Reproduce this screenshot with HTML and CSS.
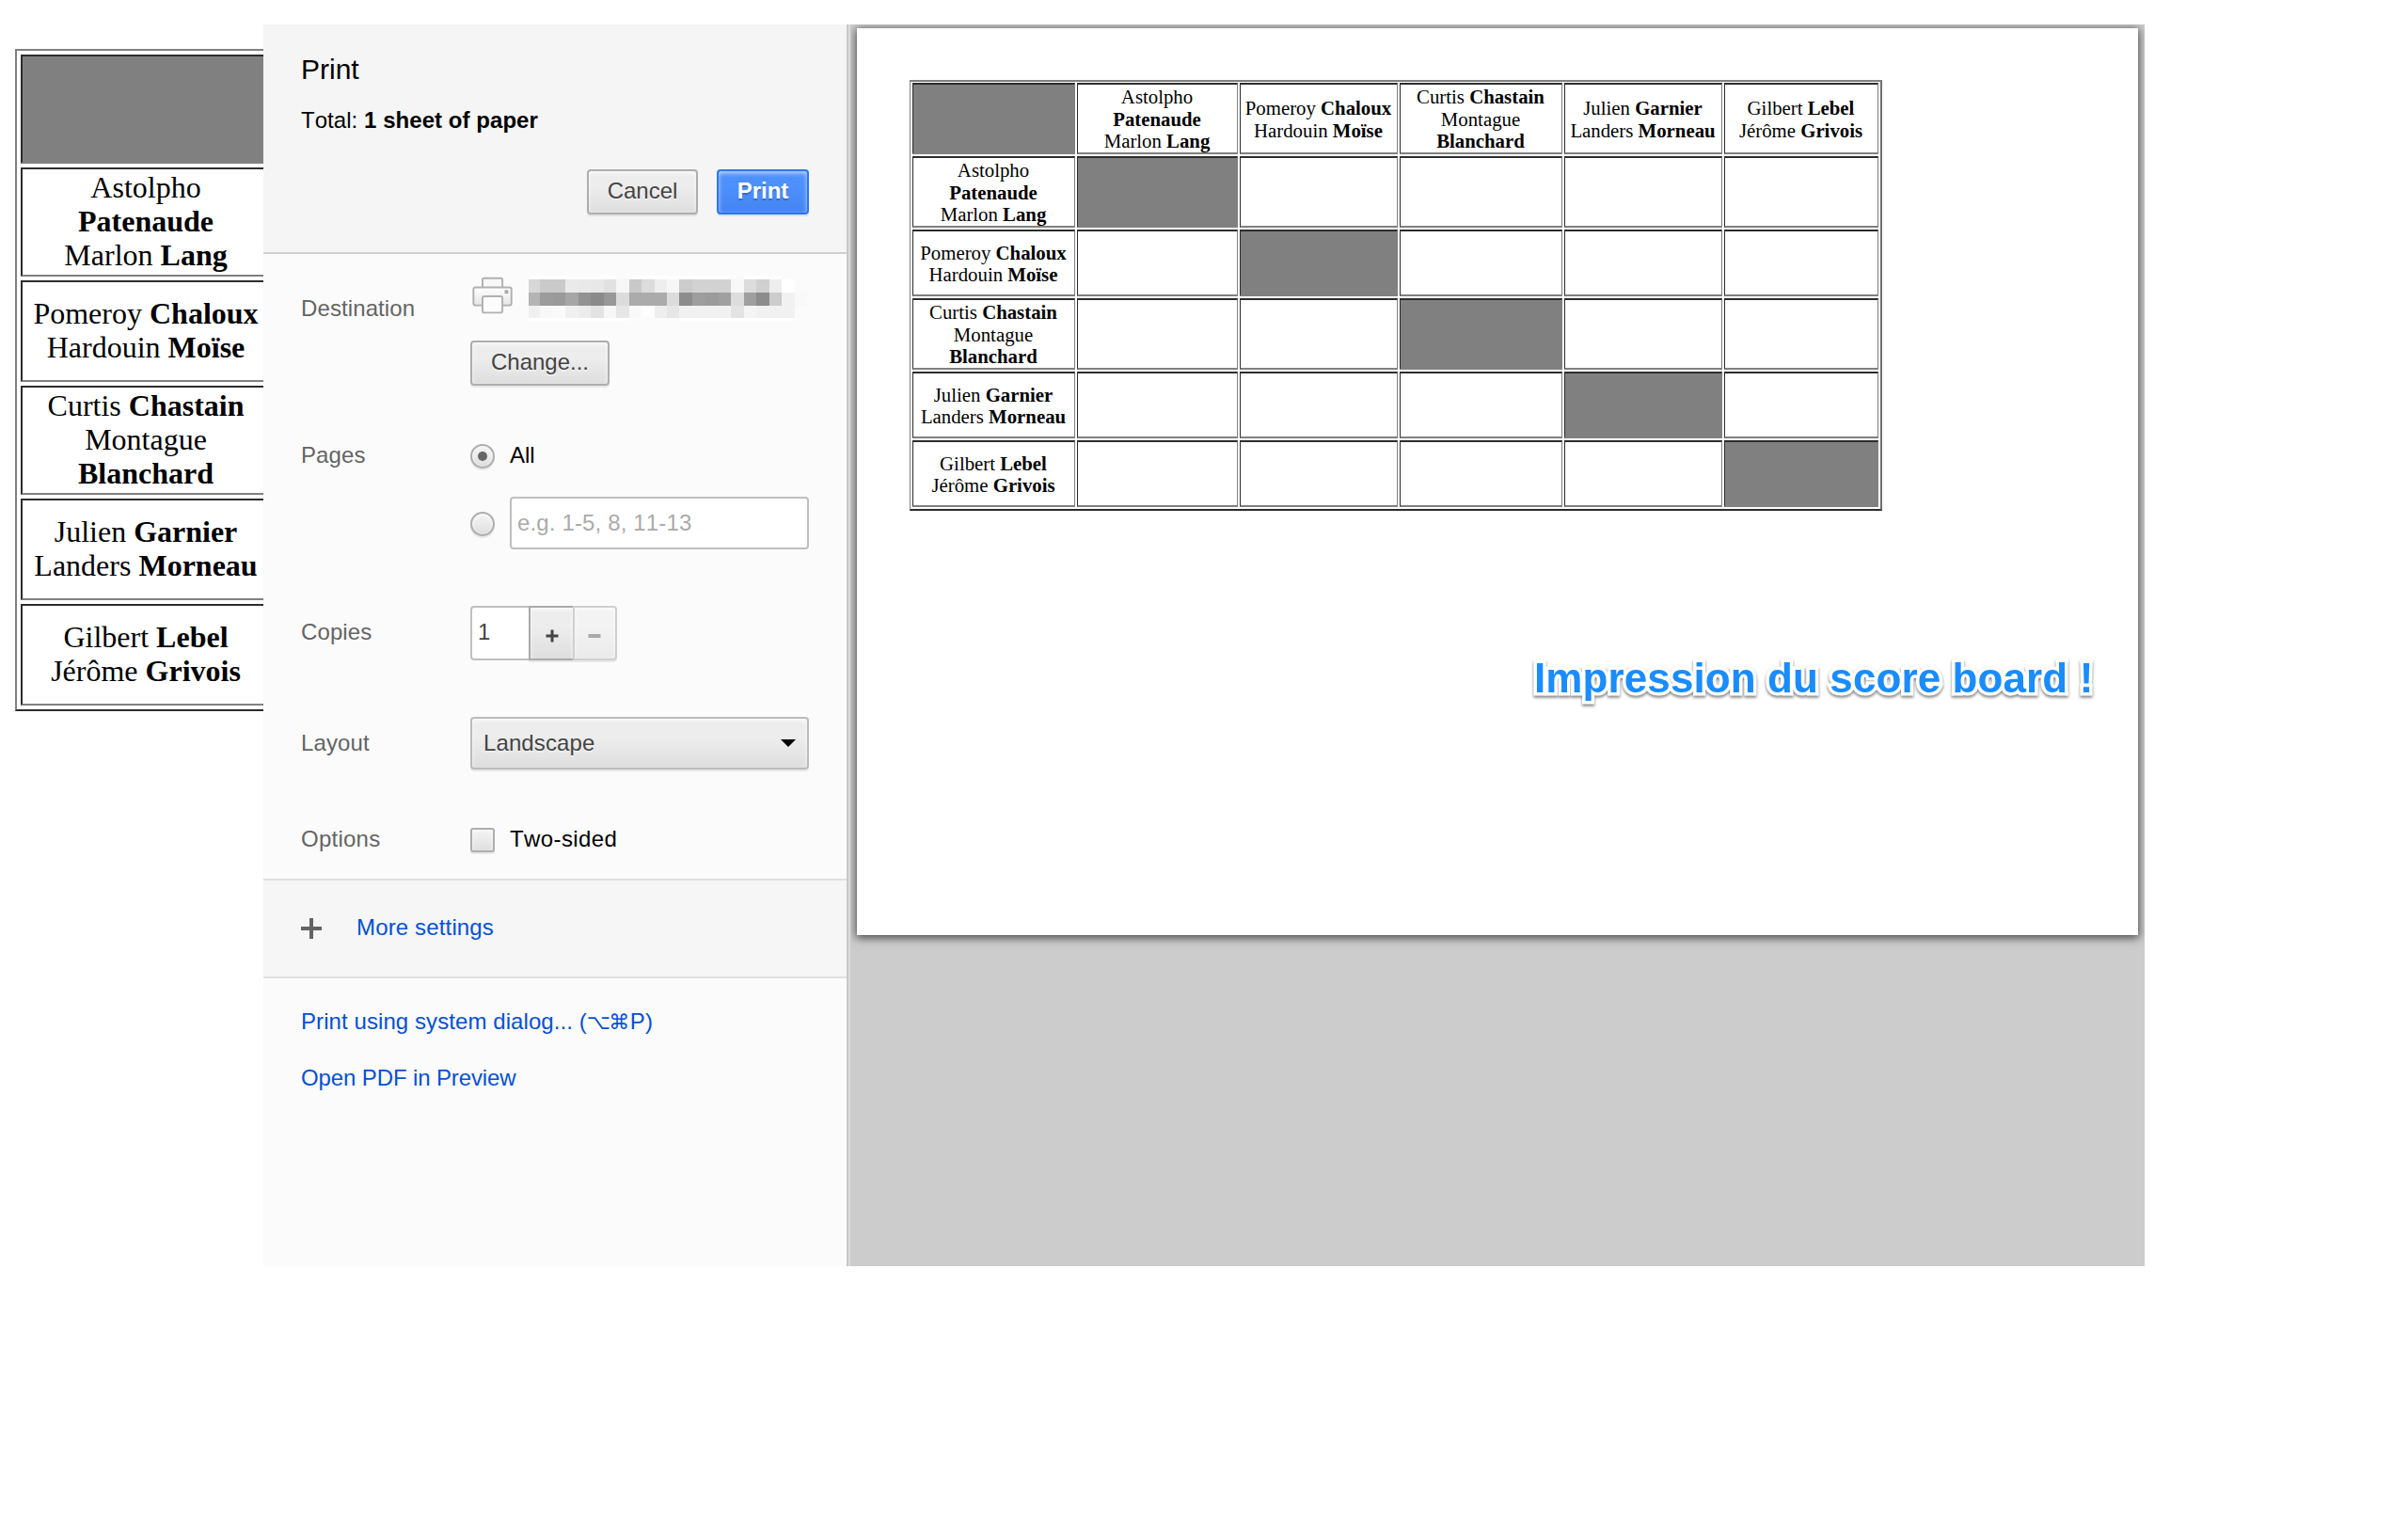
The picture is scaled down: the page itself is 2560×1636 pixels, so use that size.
FILE: index.html
```html
<!DOCTYPE html>
<html lang="en">
<head>
<meta charset="utf-8">
<title>Print</title>
<link rel="stylesheet" href="styles.css">
</head>
<body>
<main class="board">
  <div class="cell cell-filled"></div>
  <div class="cell">Astolpho<br><b>Patenaude</b><br>Marlon <b>Lang</b></div>
  <div class="cell">Pomeroy <b>Chaloux</b><br>Hardouin <b>Moïse</b></div>
  <div class="cell">Curtis <b>Chastain</b><br>Montague<br><b>Blanchard</b></div>
  <div class="cell">Julien <b>Garnier</b><br>Landers <b>Morneau</b></div>
  <div class="cell">Gilbert <b>Lebel</b><br>Jérôme <b>Grivois</b></div>
</main>

<div class="dialog">
  <aside class="sidebar">
    <header class="header">
      <h1 class="title">Print</h1>
      <p class="total">Total: <b>1 sheet of paper</b></p>
      <div class="actions">
        <button class="button cancel">Cancel</button>
        <button class="button primary">Print</button>
      </div>
    </header>

    <section class="row row-destination">
      <div class="label">Destination</div>
      <div class="control">
        <div class="printer">
          <svg class="printer-icon" width="48" height="48" viewBox="0 0 48 48">
            <defs><linearGradient id="body" x1="0" y1="0" x2="0" y2="1"><stop offset="0" stop-color="#fff"/><stop offset="1" stop-color="#e6e6e6"/></linearGradient></defs>
            <g stroke="#b0b0b0" stroke-width="2">
              <rect x="13.500" y="3" width="22" height="14" rx="1.5" fill="#f8f8f8"/>
              <rect x="3.500" y="13" width="42" height="20" rx="2.5" fill="url(#body)"/>
              <rect x="13.500" y="23" width="22" height="18" rx="2" fill="#fcfcfc"/>
            </g>
            <rect x="38" y="16" width="4" height="4" rx="1" fill="#a8a8a8"/>
          </svg>
          <svg class="redacted" width="310" height="50" viewBox="0 0 310 50" shape-rendering="crispEdges">
            <path fill="#fff" d="M0 0h97v4H0zM111 0h58v4h-58zM168 0h56v4h-56zM238 0h42v4h-42zM0 47h111v3H0zM168 47h126v3H168z"/>
            <g id="mosaic"></g>
          </svg>
        </div>
        <button class="button change">Change...</button>
      </div>
    </section>

    <section class="row row-pages">
      <div class="label">Pages</div>
      <div class="control">
        <div class="choice"><span class="radio radio-on"></span><span class="choice-text">All</span></div>
        <div class="choice choice-range"><span class="radio"></span><div class="field">e.g. 1-5, 8, 11-13</div></div>
      </div>
    </section>

    <section class="row row-copies">
      <div class="label">Copies</div>
      <div class="control stepper">
        <div class="count">1</div>
        <div class="step step-up"><svg width="14" height="14" viewBox="0 0 14 14"><path d="M7 .5v13M.5 7h13" stroke="#444" stroke-width="3"/></svg></div>
        <div class="step step-down"><svg width="14" height="14" viewBox="0 0 14 14"><path d="M.5 7h13" stroke="#aaa" stroke-width="4"/></svg></div>
      </div>
    </section>

    <section class="row row-layout">
      <div class="label">Layout</div>
      <div class="control">
        <div class="button select"><span>Landscape</span><svg width="16" height="8" viewBox="0 0 16 8"><path d="M0 0h16L8 8z"/></svg></div>
      </div>
    </section>

    <section class="row row-options">
      <div class="label">Options</div>
      <div class="control">
        <div class="choice"><span class="checkbox"></span><span class="choice-text">Two-sided</span></div>
      </div>
    </section>

    <section class="more">
      <svg width="22" height="22" viewBox="0 0 22 22"><path d="M11 0v22M0 11h22" stroke="#646464" stroke-width="4"/></svg>
      <a class="link">More settings</a>
    </section>

    <nav class="links">
      <a class="link link-system">Print using system dialog... (<span class="key">⌥</span><span class="key">⌘</span>P)</a>
      <a class="link link-pdf">Open PDF in Preview</a>
    </nav>
  </aside>

  <div class="preview">
    <article class="page">
      <div class="sheet">
        <div class="slot filled"></div>
        <div class="slot">Astolpho<br><b>Patenaude</b><br>Marlon <b>Lang</b></div>
        <div class="slot">Pomeroy <b>Chaloux</b><br>Hardouin <b>Moïse</b></div>
        <div class="slot">Curtis <b>Chastain</b><br>Montague<br><b>Blanchard</b></div>
        <div class="slot">Julien <b>Garnier</b><br>Landers <b>Morneau</b></div>
        <div class="slot">Gilbert <b>Lebel</b><br>Jérôme <b>Grivois</b></div>

        <div class="slot">Astolpho<br><b>Patenaude</b><br>Marlon <b>Lang</b></div>
        <div class="slot filled"></div><div class="slot"></div><div class="slot"></div><div class="slot"></div><div class="slot"></div>

        <div class="slot">Pomeroy <b>Chaloux</b><br>Hardouin <b>Moïse</b></div>
        <div class="slot"></div><div class="slot filled"></div><div class="slot"></div><div class="slot"></div><div class="slot"></div>

        <div class="slot">Curtis <b>Chastain</b><br>Montague<br><b>Blanchard</b></div>
        <div class="slot"></div><div class="slot"></div><div class="slot filled"></div><div class="slot"></div><div class="slot"></div>

        <div class="slot">Julien <b>Garnier</b><br>Landers <b>Morneau</b></div>
        <div class="slot"></div><div class="slot"></div><div class="slot"></div><div class="slot filled"></div><div class="slot"></div>

        <div class="slot">Gilbert <b>Lebel</b><br>Jérôme <b>Grivois</b></div>
        <div class="slot"></div><div class="slot"></div><div class="slot"></div><div class="slot"></div><div class="slot filled"></div>
      </div>
      <p class="caption">Impression du score board !</p>
    </article>
  </div>
</div>
<script src="mosaic.js"></script>
</body>
</html>
```
FILE: styles.css
```css
* { box-sizing: border-box; }

body {
  margin: 0;
  padding: 52px 0 0 16px;
  height: 1636px;
  position: relative;
  overflow: hidden;
  background: #fff;
  color: #000;
  font-family: "Liberation Sans", Arial, sans-serif;
  font-size: 24px;
  line-height: 28px;
}

h1, p { margin: 0; font-weight: normal; }

/* Score board of the page behind the dialog */
.board {
  width: 278px;
  display: grid;
  grid-template-rows: 116px 116px 108px 116px 108px 108px;
  gap: 4px;
  padding: 4px;
  border: 2px solid;
  border-color: #808080 #2c2c2c #2c2c2c #808080;
  font-family: "Liberation Serif", "Times New Roman", serif;
  font-size: 32px;
  line-height: 36px;
}

.cell {
  align-content: center;
  text-align: center;
  white-space: nowrap;
  padding-bottom: 2px;
  border: 2px solid;
  border-color: #2c2c2c #808080 #808080 #2c2c2c;
}

.cell-filled { background: #808080; }

/* Dialog */
.dialog {
  position: absolute;
  left: 280px;
  top: 26px;
  width: 2000px;
  height: 1320px;
  display: flex;
}

.sidebar {
  width: 622px;
  background: #fbfbfb;
  border-right: 2px solid #c8c8c8;
  font-kerning: none;
}

.header {
  height: 244px;
  padding: 30px 40px 0;
  background: #f5f5f5;
  border-bottom: 2px solid #d0d0d0;
}

.title { font-size: 30px; line-height: 36px; }
.total { margin-top: 22px; letter-spacing: .05px; }

.actions {
  display: flex;
  justify-content: flex-end;
  gap: 20px;
  margin-top: 38px;
}

.button {
  display: block;
  height: 48px;
  margin: 0;
  padding: 0 0 2px;
  border: 2px solid #aeaeae;
  border-radius: 4px;
  background: linear-gradient(#ededed, #ededed 38%, #dedede);
  box-shadow: 0 2px 0 rgba(0, 0, 0, .08), inset 0 2px 4px rgba(255, 255, 255, .75);
  color: #444;
  font: 24px/42px "Liberation Sans", Arial, sans-serif;
  text-shadow: 0 2px 0 #f0f0f0;
}

.cancel { width: 118px; }
.change { width: 148px; }

.primary {
  width: 98px;
  border-color: #2a77f0;
  background: linear-gradient(#4d90fe, #4d90fe 38%, #4484ef);
  box-shadow: 0 2px 0 rgba(0, 0, 0, .08), inset 0 2px 5px rgba(255, 255, 255, .65);
  color: #fff;
  font-weight: bold;
  text-shadow: 0 2px 1px rgba(0, 0, 0, .25);
}

.row {
  display: grid;
  grid-template-columns: 180px 360px;
  padding-left: 40px;
}

.label { color: #646464; letter-spacing: .1px; }

.row-destination { height: 174px; }
.row-destination .label { padding-top: 44px; }
.row-destination .control { padding-top: 22px; }

.row-pages { height: 176px; }
.row-pages .label { padding-top: 26px; }
.row-pages .control { padding-top: 28px; }

.row-copies { height: 118px; }
.row-copies .label { padding-top: 38px; }
.row-copies .control { padding-top: 24px; }

.row-layout { height: 118px; }
.row-layout .label { padding-top: 38px; }
.row-layout .control { padding-top: 24px; }

.row-options { height: 78px; }
.row-options .label { padding-top: 22px; letter-spacing: .25px; }
.row-options .control { padding-top: 24px; letter-spacing: .4px; }

.printer {
  display: flex;
  align-items: flex-start;
  gap: 16px;
  height: 70px;
}

.choice { display: flex; gap: 16px; }
.choice-text { margin-top: -2px; }
.choice-range { margin-top: 30px; }
.choice-range .radio { margin-top: 16px; }

.radio, .checkbox {
  display: grid;
  place-content: center;
  flex: none;
  width: 26px;
  height: 26px;
  border: 2px solid #aeaeae;
  background: linear-gradient(#ededed, #ededed 38%, #dedede);
  box-shadow: 0 2px 0 rgba(0, 0, 0, .08), inset 0 2px 4px rgba(255, 255, 255, .75);
}

.radio { border-radius: 50%; }
.checkbox { border-radius: 3px; }

.radio-on::after {
  content: "";
  width: 10px;
  height: 10px;
  border-radius: 50%;
  background: #666;
}

.field {
  width: 318px;
  height: 56px;
  padding: 12px 6px;
  border: 2px solid #bfbfbf;
  border-radius: 4px;
  background: #fff;
  color: #aaa;
  letter-spacing: .15px;
}

.stepper { display: flex; }

.count {
  width: 62px;
  height: 58px;
  padding: 12px 6px;
  border: 2px solid #bfbfbf;
  border-right: 0;
  border-radius: 4px 0 0 4px;
  background: #fff;
  color: #444;
}

.step {
  display: grid;
  place-content: center;
  width: 47px;
  height: 58px;
  padding-top: 6px;
  border: 2px solid #aaa;
  background: linear-gradient(#ededed, #ededed 38%, #dedede);
  box-shadow: 0 2px 0 rgba(0, 0, 0, .08), inset 0 2px 4px rgba(255, 255, 255, .75);
}

.step svg { display: block; }
.step-up { border-right: 0; }

.step-down {
  padding-right: 2px;
  border-color: #cfcfcf;
  border-radius: 0 4px 4px 0;
  background: linear-gradient(#f3f3f3, #f3f3f3 38%, #eaeaea);
}

.select {
  display: flex;
  align-items: center;
  justify-content: space-between;
  height: 56px;
  padding: 0 12px 1px;
  border-color: #bbb;
  letter-spacing: .1px;
}

.more {
  display: flex;
  align-items: center;
  gap: 37px;
  height: 106px;
  padding-left: 40px;
  background: #f6f6f6;
  border-top: 2px solid #e0e0e0;
  border-bottom: 2px solid #e0e0e0;
}

.more .link { margin-top: -2px; letter-spacing: .15px; }

.links {
  display: flex;
  flex-direction: column;
  gap: 32px;
  padding: 32px 40px;
}

.link { color: #0550d4; }
.link-system { letter-spacing: .08px; }
.link-pdf { letter-spacing: -.12px; }

.key {
  display: inline-block;
  width: 23px;
  font-family: "DejaVu Sans", sans-serif;
  font-size: 22px;
  line-height: 20px;
  text-align: center;
}

/* Preview */
.preview {
  flex: 1;
  padding: 4px 0 0 7px;
  border-left: 2px solid #dcdcdc;
  background: #ccc;
  overflow: hidden;
}

.page {
  width: 1362px;
  height: 964px;
  padding: 54px 56px 0;
  background: #fff;
  box-shadow: 0 2px 9px 1px rgba(0, 0, 0, .65);
}

.sheet {
  width: 1034px;
  display: grid;
  grid-template-columns: 173px 171px 168px 173px 168px 164px;
  grid-template-rows: 76px 76px 71px 76px 71px 71px;
  gap: 2px;
  margin-top: 1px;
  padding: 1px 2px 2px;
  border: 2px solid;
  border-left-width: 1px;
  border-color: #808080 #707070 #2c2c2c #808080;
  font-family: "Liberation Serif", "Times New Roman", serif;
  font-size: 20.8px;
  line-height: 23.4px;
}

.slot {
  align-content: center;
  text-align: center;
  white-space: nowrap;
  padding: 1px 1px 0 0;
  border: solid;
  border-width: 2px 1px;
  border-color: #2c2c2c #808080 #808080 #2c2c2c;
}

.filled { background: #808080; }

.caption {
  margin: 153px 0 0 664px;
  color: #1a8cff;
  font-size: 44px;
  font-weight: bold;
  line-height: 50px;
  letter-spacing: .1px;
  white-space: nowrap;
  -webkit-text-stroke: 7px #fff;
  paint-order: stroke fill;
  filter: drop-shadow(0 2px 1.5px rgba(0, 0, 0, .5));
}
```
FILE: mosaic.js
```js
// Grey levels of the pixelated printer name, one row of blocks per line.
const rows = [
  "d8 ca ca ea e9 e8 e1 f6 c8 dc ee f6 cc d2 d2 d2 f8 dc d0 ee ff fa",
  "b4 9c 9a a6 92 8a 98 dc ab ab ab dc 8c 9e 9b a0 dd 9f 8c cc f1 f9",
  "f0 f8 fa f0 ec e3 f7 e6 f9 fd ee e6 f1 f1 f1 f1 e3 f4 f1 f1 f1 fb"
];
const tops = [4, 19, 33, 47];
const left = i => (i ? Math.round(14.06 * i - 1.4) : 0);
const group = document.getElementById("mosaic");
rows.forEach((row, r) => row.split(" ").forEach((v, i) => {
  const rect = document.createElementNS("http://www.w3.org/2000/svg", "rect");
  rect.setAttribute("x", left(i));
  rect.setAttribute("y", tops[r]);
  rect.setAttribute("width", left(i + 1) - left(i));
  rect.setAttribute("height", tops[r + 1] - tops[r]);
  rect.setAttribute("fill", "#" + v + v + v);
  group.append(rect);
}));
```
